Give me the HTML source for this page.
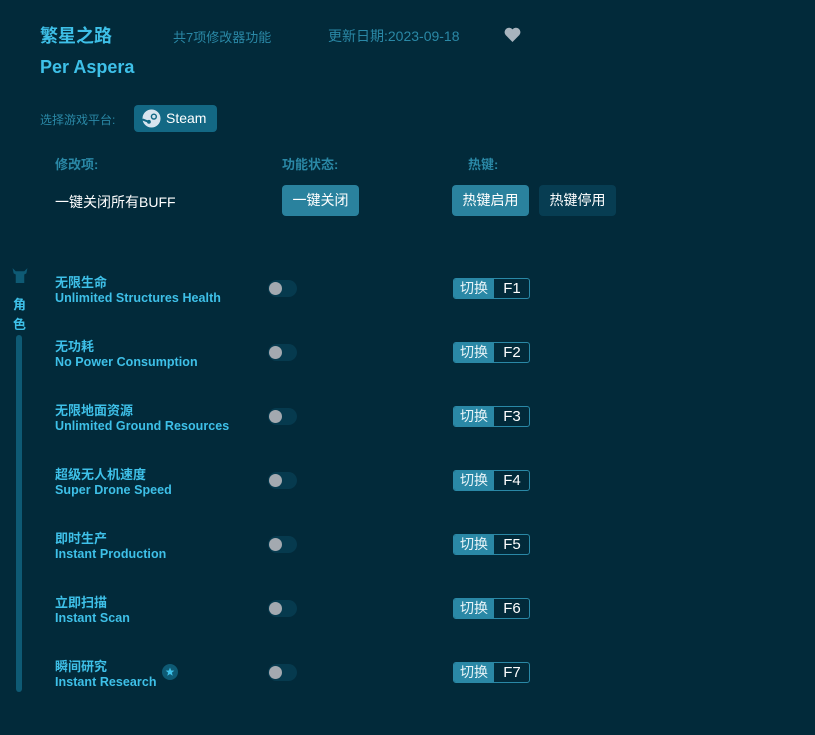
<!DOCTYPE html>
<html><head><meta charset="utf-8"><style>
*{margin:0;padding:0;box-sizing:border-box}
body{width:815px;height:735px;background:#022a3a;font-family:"Liberation Sans","Noto Sans CJK SC",sans-serif;position:relative;overflow:hidden;color:#fff}
.a{position:absolute;white-space:nowrap}
.btn{position:absolute;height:31px;border-radius:4px;font-size:14px;line-height:31px;text-align:center;color:#fff}
.cn{font-size:13px;font-weight:bold;color:#3ec0e8}
.en{font-size:12.5px;font-weight:bold;color:#3ec0e8;letter-spacing:0.05px}
.tg{position:absolute;left:268px;width:29px;height:17px;border-radius:9px;background:#063a4e}
.tg i{position:absolute;left:1px;top:2px;width:13px;height:13px;border-radius:50%;background:#a3a9b0}
.hk{position:absolute;left:453px;width:77px;height:21px;border:1px solid #2a88a6;border-radius:3px;overflow:hidden;font-size:15px;line-height:19px}
.hk b{position:absolute;left:0;top:0;width:40px;height:19px;background:#2a88a6;font-weight:normal;text-align:center;color:#e8f4f8;font-size:14px}
.hk span{position:absolute;left:40px;width:36px;text-align:center;color:#fff}
</style></head><body>
<div class="a" style="left:40px;top:22px;font-size:18px;font-weight:bold;color:#3ec0e8">繁星之路</div>
<div class="a" style="left:173px;top:27px;font-size:13px;color:#2a88a6">共7项修改器功能</div>
<div class="a" style="left:328px;top:26px;font-size:14px;color:#2a88a6">更新日期:2023-09-18</div>
<svg class="a" style="left:504px;top:27px" width="17" height="15" viewBox="0 0 16 14"><path d="M8 14L1.5 7.5A4 4 0 0 1 8 2.2A4 4 0 0 1 14.5 7.5Z" fill="#a8b4be"/></svg>
<div class="a" style="left:40px;top:57px;font-size:18px;font-weight:bold;color:#3ec0e8">Per Aspera</div>
<div class="a" style="left:40px;top:111px;font-size:12px;color:#2a88a6">选择游戏平台:</div>
<div class="btn" style="left:134px;top:105px;width:83px;height:27px;background:#136884;line-height:27px;font-size:14px;text-align:left;padding-left:32px">Steam</div>
<svg class="a" style="left:142px;top:109px" width="19" height="19" viewBox="0 0 20 20"><circle cx="10" cy="10" r="9.5" fill="#d8e4ee"/><circle cx="12.5" cy="8" r="3.3" fill="#136884"/><circle cx="12.5" cy="8" r="1.8" fill="#d8e4ee"/><path d="M0.5 11L7 13.5" stroke="#136884" stroke-width="2.2"/><circle cx="7.3" cy="13.5" r="2" fill="#136884"/></svg>
<div class="a" style="left:55px;top:154px;font-size:13px;font-weight:bold;color:#2a88a6">修改项:</div>
<div class="a" style="left:282px;top:154px;font-size:13px;font-weight:bold;color:#2a88a6">功能状态:</div>
<div class="a" style="left:468px;top:154px;font-size:13px;font-weight:bold;color:#2a88a6">热键:</div>
<div class="a" style="left:55px;top:192px;font-size:14px;color:#fff">一键关闭所有BUFF</div>
<div class="btn" style="left:282px;top:185px;width:77px;background:#2a829e">一键关闭</div>
<div class="btn" style="left:452px;top:185px;width:77px;background:#2a829e">热键启用</div>
<div class="btn" style="left:539px;top:185px;width:77px;background:#073d52">热键停用</div>
<svg class="a" style="left:11px;top:267px" width="18" height="17" viewBox="0 0 16 16"><path d="M1 1L4 4H12L15 1L14 6L12 7V15H4V7L2 6Z" fill="#0e5a74"/></svg>
<div class="a" style="left:13px;top:295px;font-size:13px;font-weight:bold;color:#3ec0e8;line-height:20px;white-space:normal;width:14px">角<br>色</div>
<div class="a" style="left:16px;top:335px;width:6px;height:357px;border-radius:3px;background:#0e5a74"></div>

<div class="a cn" style="left:55px;top:272px">无限生命</div><div class="a en" style="left:55px;top:291px">Unlimited Structures Health</div>
<div class="tg" style="top:280px"><i></i></div><div class="hk" style="top:278px"><b>切换</b><span>F1</span></div>

<div class="a cn" style="left:55px;top:336px">无功耗</div><div class="a en" style="left:55px;top:355px">No Power Consumption</div>
<div class="tg" style="top:344px"><i></i></div><div class="hk" style="top:342px"><b>切换</b><span>F2</span></div>

<div class="a cn" style="left:55px;top:400px">无限地面资源</div><div class="a en" style="left:55px;top:419px">Unlimited Ground Resources</div>
<div class="tg" style="top:408px"><i></i></div><div class="hk" style="top:406px"><b>切换</b><span>F3</span></div>

<div class="a cn" style="left:55px;top:464px">超级无人机速度</div><div class="a en" style="left:55px;top:483px">Super Drone Speed</div>
<div class="tg" style="top:472px"><i></i></div><div class="hk" style="top:470px"><b>切换</b><span>F4</span></div>

<div class="a cn" style="left:55px;top:528px">即时生产</div><div class="a en" style="left:55px;top:547px">Instant Production</div>
<div class="tg" style="top:536px"><i></i></div><div class="hk" style="top:534px"><b>切换</b><span>F5</span></div>

<div class="a cn" style="left:55px;top:592px">立即扫描</div><div class="a en" style="left:55px;top:611px">Instant Scan</div>
<div class="tg" style="top:600px"><i></i></div><div class="hk" style="top:598px"><b>切换</b><span>F6</span></div>

<div class="a cn" style="left:55px;top:656px">瞬间研究</div><div class="a en" style="left:55px;top:675px">Instant Research</div>
<svg class="a" style="left:162px;top:664px" width="16" height="16" viewBox="0 0 16 16"><circle cx="8" cy="8" r="8" fill="#0e5a74"/><path d="M8 3.5L9.2 6.5L12.3 6.6L9.9 8.6L10.7 11.7L8 10L5.3 11.7L6.1 8.6L3.7 6.6L6.8 6.5Z" fill="#3ec0e8"/></svg>
<div class="tg" style="top:664px"><i></i></div><div class="hk" style="top:662px"><b>切换</b><span>F7</span></div>
</body></html>
